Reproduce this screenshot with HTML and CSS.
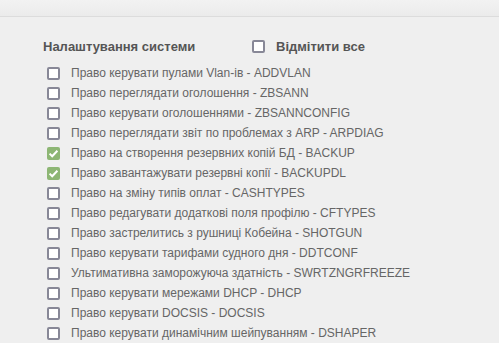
FILE: index.html
```html
<!DOCTYPE html>
<html lang="uk">
<head>
<meta charset="UTF-8">
<title>Налаштування системи</title>
<link rel="stylesheet" href="styles.css">
</head>
<body>

<div class="topbar"></div>

<div class="panel">
  <div class="head">
    <span class="title">Налаштування системи</span>
    <label class="all"><input type="checkbox"> Відмітити все</label>
  </div>

  <div class="rights">
    <label class="row"><input type="checkbox"> Право керувати пулами Vlan-ів - ADDVLAN</label>
    <label class="row"><input type="checkbox"> Право переглядати оголошення - ZBSANN</label>
    <label class="row"><input type="checkbox"> Право керувати оголошеннями - ZBSANNCONFIG</label>
    <label class="row"><input type="checkbox"> Право переглядати звіт по проблемах з ARP - ARPDIAG</label>
    <label class="row"><input type="checkbox" checked> Право на створення резервних копій БД - BACKUP</label>
    <label class="row"><input type="checkbox" checked> Право завантажувати резервні копії - BACKUPDL</label>
    <label class="row"><input type="checkbox"> Право на зміну типів оплат - CASHTYPES</label>
    <label class="row"><input type="checkbox"> Право редагувати додаткові поля профілю - CFTYPES</label>
    <label class="row"><input type="checkbox"> Право застрелитись з рушниці Кобейна - SHOTGUN</label>
    <label class="row"><input type="checkbox"> Право керувати тарифами судного дня - DDTCONF</label>
    <label class="row"><input type="checkbox"> Ультимативна заморожуюча здатність - SWRTZNGRFREEZE</label>
    <label class="row"><input type="checkbox"> Право керувати мережами DHCP - DHCP</label>
    <label class="row"><input type="checkbox"> Право керувати DOCSIS - DOCSIS</label>
    <label class="row"><input type="checkbox"> Право керувати динамічним шейпуванням - DSHAPER</label>
  </div>
</div>

</body>
</html>
```

FILE: styles.css
```css
body {
  margin: 0;
  font-family: "Liberation Sans", Arial, sans-serif;
  background: #efefef;
  color: #666;
}

.topbar {
  height: 16px;
  background: linear-gradient(#f2f2f2, #ebebeb);
  border-bottom: 1px solid #dcdcdc;
}

.panel {
  padding: 20px 0 0 43px;
}

.head {
  display: flex;
  align-items: center;
  height: 18px;
}

.title {
  font-size: 13px;
  font-weight: bold;
  color: #555;
  width: 209px;
}

.all {
  display: flex;
  align-items: center;
  gap: 11px;
  font-size: 13px;
  font-weight: bold;
  color: #555;
}

.rights {
  margin-top: 8px;
  padding-left: 4px;
}

.row {
  display: flex;
  align-items: center;
  gap: 11px;
  height: 20px;
  font-size: 12px;
}

input[type="checkbox"] {
  appearance: none;
  -webkit-appearance: none;
  margin: 0;
  width: 13px;
  height: 13px;
  border: 2px solid #888897;
  border-radius: 2px;
  background: #fff;
  box-sizing: border-box;
  flex: none;
}

input[type="checkbox"]:checked {
  border: none;
  background: #8db674 url("data:image/svg+xml;utf8,<svg xmlns='http://www.w3.org/2000/svg' viewBox='0 0 13 13'><path d='M2.6 6.6l2.6 2.6L10.4 3.8' fill='none' stroke='white' stroke-width='2'/></svg>") no-repeat center;
}
```
